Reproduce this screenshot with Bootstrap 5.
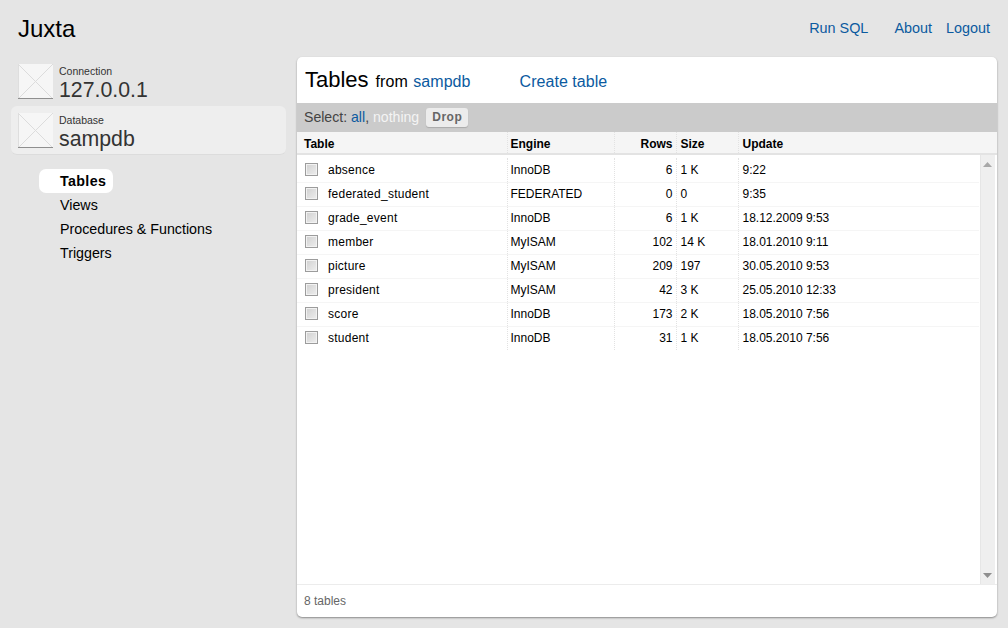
<!DOCTYPE html>
<html lang="en">
<head>
    <meta charset="UTF-8">
    <meta name="viewport" content="width=device-width, initial-scale=1.0">
    <title>Juxta</title>
    <link href="https://cdn.jsdelivr.net/npm/bootstrap@5.3.0/dist/css/bootstrap.min.css" rel="stylesheet">
    <style>
        body {
            background-color: #e5e5e5;
            font-family: "Liberation Sans", Arial, sans-serif;
            font-size: 14px;
            color: #000;
            height: 100vh;
            overflow: hidden;
        }
        a { color: #0b5a9f; text-decoration: none; }
        .top-bar { height: 57px; padding: 0 18px; }
        .brand-name { font-size: 24px; line-height: 1; }
        .top-links { gap: 14px; font-size: 14.4px; }
        .top-links .run-sql { margin-right: 12px; }
        .page-main { padding: 0 11px 11px; gap: 11px; min-height: 0; }
        .side-col { width: 275px; flex-shrink: 0; }
        .ctx-item { height: 49px; padding: 7px; gap: 6px; border-radius: 6px; color: #333; }
        .ctx-item.current { background-color: #eeeeee; border-bottom: 1px solid #dcdcdc; }
        .ctx-icon { width: 35px; height: 35px; flex-shrink: 0; display: block; }
        .ctx-label { font-size: 10.5px; line-height: 12px; margin-top: 1px; }
        .ctx-value { font-size: 21.3px; line-height: 26px; }
        .side-nav { margin: 14px 0 0 28px; align-items: flex-start; }
        .side-nav .nav-link { color: #000; padding: 0 7px 0 21px; line-height: 24px; height: 24px; font-size: 14.25px; border-radius: 7px; }
        .side-nav .nav-link.active { background-color: #fff; font-weight: bold; letter-spacing: .35px; }
        .data-panel { background-color: #fff; border-radius: 5px; box-shadow: 0 1px 2px #8a8a8a; min-width: 0; overflow: hidden; }
        .panel-title { height: 46px; padding: 6px 8px 0; }
        .title-main { font-size: 22px; margin-right: 7px; }
        .title-sub { font-size: 16px; letter-spacing: .05px; }
        .title-sub a { margin-left: 1px; }
        .title-create { font-size: 16px; letter-spacing: .05px; margin-left: 49px; }
        .select-bar { height: 29px; background-color: #cbcbcb; padding: 0 7px; color: #444; gap: 7px; }
        .select-bar span { font-size: 14.1px; }
        .select-bar .none-link { color: #f4f4f4; }
        .drop-btn { font-size: 12px; font-weight: bold; letter-spacing: .5px; color: #666; background-color: #ececec; border: 0; border-radius: 3px; padding: 0 6px; height: 19px; line-height: 19px; box-shadow: 0 1px 1px #aaa; }
        .grid-table { table-layout: fixed; width: 100%; margin: 0; font-size: 12px; border-collapse: collapse; }
        .grid-table th, .grid-table td { padding: 0 3px 0 4px; border-right: 1px dotted #e2e2e2; white-space: nowrap; overflow: hidden; }
        .grid-table th:nth-child(2), .grid-table td:nth-child(2) { padding-left: 3px; }
        .grid-table th:last-child, .grid-table td:last-child { border-right: 0; }
        .grid-head { background-color: #f5f5f5; border-bottom: 2px solid #e3e3e3; }
        .grid-head th { height: 21px; padding-top: 2px; background: transparent; color: #000; }
        .grid-head th.first-col { padding-left: 7px; }
        .grid-scroll { min-height: 0; padding: 3px 2px 0 0; }
        .grid-body-wrap { min-width: 0; }
        .grid-body td { height: 24px; border-bottom: 1px solid #f5f5f5; color: #000; }
        .grid-body tr:last-child td { border-bottom: 0; }
        .name-cell { letter-spacing: .25px; }
        .grid-body td.name-cell { padding-left: 8px; }
        .row-check { width: 13px; height: 13px; margin: 0 10px 0 0; vertical-align: -2px; appearance: none; background: linear-gradient(135deg, #d0d0d0, #eeeeee); border: 1px solid #9c9c9c; box-shadow: inset 0 0 0 1px #f2f2f2; display: inline-block; }
        .scroll-track { width: 15px; flex-shrink: 0; margin: -3px 0 0 1px; background-color: #efefef; border-left: 1px solid #e6e6e6; padding: 7px 1px 6px 0; }
        .scroll-arrow { width: 9px; height: 5px; display: block; }
        .panel-foot { height: 33px; border-top: 1px solid #ececec; padding: 0 7px; font-size: 12px; color: #666; }
    </style>
</head>
<body class="d-flex flex-column">
    <header class="top-bar d-flex justify-content-between align-items-center">
        <div class="brand-name">Juxta</div>
        <div class="top-links d-flex">
            <a class="run-sql" href="#">Run SQL</a>
            <a href="#">About</a>
            <a href="#">Logout</a>
        </div>
    </header>

    <div class="page-main d-flex flex-grow-1">
        <aside class="side-col">
            <div class="ctx-item d-flex">
                <svg class="ctx-icon" viewBox="0 0 35 35">
                    <rect width="35" height="35" fill="#f6f6f6"/>
                    <path d="M0 0L35 35M35 0L0 35" stroke="#dcdcdc" fill="none"/>
                    <path d="M0 34.5H35" stroke="#8f8f8f"/>
                    <path d="M0.5 0V34" stroke="#dedede"/>
                </svg>
                <div>
                    <div class="ctx-label">Connection</div>
                    <div class="ctx-value">127.0.0.1</div>
                </div>
            </div>
            <div class="ctx-item current d-flex">
                <svg class="ctx-icon" viewBox="0 0 35 35">
                    <rect width="35" height="35" fill="#f6f6f6"/>
                    <path d="M0 0L35 35M35 0L0 35" stroke="#dcdcdc" fill="none"/>
                    <path d="M0 34.5H35" stroke="#8f8f8f"/>
                    <path d="M0.5 0V34" stroke="#dedede"/>
                </svg>
                <div>
                    <div class="ctx-label">Database</div>
                    <div class="ctx-value">sampdb</div>
                </div>
            </div>
            <nav class="side-nav nav flex-column">
                <a class="nav-link active" href="#">Tables</a>
                <a class="nav-link" href="#">Views</a>
                <a class="nav-link" href="#">Procedures &amp; Functions</a>
                <a class="nav-link" href="#">Triggers</a>
            </nav>
        </aside>

        <main class="data-panel d-flex flex-column flex-grow-1">
            <div class="panel-title d-flex align-items-baseline">
                <span class="title-main">Tables</span>
                <span class="title-sub">from&nbsp;<a href="#">sampdb</a></span>
                <a class="title-create" href="#">Create table</a>
            </div>
            <div class="select-bar d-flex align-items-center">
                <span>Select: <a href="#">all</a>, <a class="none-link" href="#">nothing</a></span>
                <button class="drop-btn" type="button">Drop</button>
            </div>
            <div class="grid-head">
                <table class="grid-table">
                    <colgroup><col style="width:210px"><col style="width:107px"><col style="width:62px"><col style="width:62px"><col></colgroup>
                    <tr>
                        <th class="first-col">Table</th>
                        <th>Engine</th>
                        <th class="text-end">Rows</th>
                        <th>Size</th>
                        <th>Update</th>
                    </tr>
                </table>
            </div>
            <div class="grid-scroll d-flex flex-grow-1">
                <div class="grid-body-wrap flex-grow-1">
                    <table class="grid-table grid-body" id="tableRows">
                        <colgroup><col style="width:210px"><col style="width:107px"><col style="width:62px"><col style="width:62px"><col></colgroup>
                    </table>
                </div>
                <div class="scroll-track d-flex flex-column justify-content-between align-items-center">
                    <svg class="scroll-arrow" viewBox="0 0 9 5"><path d="M4.5 0L9 5H0Z" fill="#a8a8a8"/></svg>
                    <svg class="scroll-arrow" viewBox="0 0 9 5"><path d="M4.5 5L9 0H0Z" fill="#8f8f8f"/></svg>
                </div>
            </div>
            <div class="panel-foot d-flex align-items-center">8 tables</div>
        </main>
    </div>

    <script>
        // Table rows
        const tables = [
            ['absence', 'InnoDB', '6', '1 K', '9:22'],
            ['federated_student', 'FEDERATED', '0', '0', '9:35'],
            ['grade_event', 'InnoDB', '6', '1 K', '18.12.2009 9:53'],
            ['member', 'MyISAM', '102', '14 K', '18.01.2010 9:11'],
            ['picture', 'MyISAM', '209', '197', '30.05.2010 9:53'],
            ['president', 'MyISAM', '42', '3 K', '25.05.2010 12:33'],
            ['score', 'InnoDB', '173', '2 K', '18.05.2010 7:56'],
            ['student', 'InnoDB', '31', '1 K', '18.05.2010 7:56']
        ];
        document.getElementById('tableRows').insertAdjacentHTML('beforeend', tables.map(t => `
            <tr>
                <td class="name-cell"><input class="row-check" type="checkbox">${t[0]}</td>
                <td>${t[1]}</td>
                <td class="text-end">${t[2]}</td>
                <td>${t[3]}</td>
                <td>${t[4]}</td>
            </tr>
        `).join(''));
    </script>
    <script src="https://cdn.jsdelivr.net/npm/bootstrap@5.3.0/dist/js/bootstrap.bundle.min.js"></script>
</body>
</html>
